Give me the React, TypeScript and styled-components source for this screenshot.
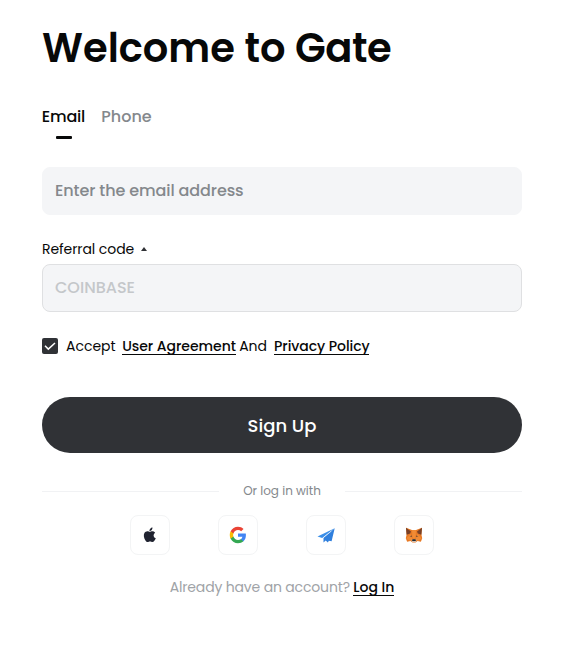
import React from "react";
import styled, { createGlobalStyle } from "styled-components";

const GlobalStyle = createGlobalStyle`
  * { box-sizing: border-box; }
  body {
    margin: 0;
    background: #fff;
    color: #070808;
    font-family: Poppins, Inter, "Liberation Sans", sans-serif;
  }
`;

const Page = styled.main`
  display: flex;
  flex-direction: column;
  width: 480px;
  margin-left: 42px;
  padding-top: 20px;
`;

const Label = styled.span<{ $track?: number }>`
  letter-spacing: ${(p) => p.$track ?? 0}px;
  white-space: nowrap;
`;

const Title = styled.h1`
  margin: 0;
  height: 56px;
  font-size: 40px;
  line-height: 56px;
  font-weight: 600;
  white-space: nowrap;
`;

const Tabs = styled.nav`
  display: flex;
  gap: 16px;
  margin-top: 29px;
  height: 35px;
`;

const Tab = styled.button<{ $active?: boolean; $width: number }>`
  display: flex;
  flex-direction: column;
  align-items: center;
  width: ${(p) => p.$width}px;
  padding: 0;
  border: 0;
  background: none;
  font: 500 16px/24px Poppins, Inter, sans-serif;
  color: ${(p) => (p.$active ? "#070808" : "#84888c")};

  &::after {
    content: "";
    width: 16px;
    height: 3px;
    margin-top: 7px;
    border-radius: 1px;
    background: ${(p) => (p.$active ? "#070808" : "transparent")};
  }
`;

const Field = styled.div<{ $disabled?: boolean }>`
  display: flex;
  align-items: center;
  height: 48px;
  padding: 0 12px;
  border: 1px solid ${(p) => (p.$disabled ? "#dfe0e2" : "#f4f5f7")};
  border-radius: 8px;
  background: #f4f5f7;
  color: ${(p) => (p.$disabled ? "#c4c7ca" : "#84888c")};
  font-size: 16px;
  font-weight: 500;
  line-height: 22px;
`;

const EmailField = styled(Field)`
  margin-top: 27px;
`;

const ReferralHeader = styled.div`
  display: flex;
  align-items: center;
  gap: 7px;
  height: 22px;
  margin: 23px 0 4px;
  font-size: 14px;
`;

const Terms = styled.div`
  display: flex;
  align-items: center;
  height: 22px;
  margin-top: 23px;
  font-size: 14px;
`;

const Checkbox = styled.span`
  display: flex;
  width: 16px;
  height: 16px;
  margin-right: 8px;
  border-radius: 2px;
  background: #303236;
`;

const Link = styled.a<{ $width: number; $before?: number; $after?: number; $track?: number }>`
  width: ${(p) => p.$width}px;
  height: 19px;
  margin: 0 ${(p) => p.$after ?? 0}px 1px ${(p) => p.$before ?? 0}px;
  border-bottom: 1px solid #070808;
  color: #070808;
  font-weight: 500;
  line-height: 21px;
  letter-spacing: ${(p) => p.$track ?? 0}px;
  white-space: nowrap;
`;

const Submit = styled.button`
  height: 56px;
  margin-top: 40px;
  padding: 2px 0 0;
  border: 0;
  border-radius: 28px;
  background: #303236;
  color: #fff;
  font: 500 18px/54px Poppins, Inter, sans-serif;
`;

const Divider = styled.div`
  display: flex;
  align-items: center;
  justify-content: center;
  height: 18px;
  margin-top: 29px;
  color: #84888c;
  font-size: 12px;

  &::before,
  &::after {
    content: "";
    flex: 1;
    height: 1px;
    background: #f1f2f4;
  }
`;

const DividerText = styled.span`
  width: 126px;
  text-align: center;
`;

const Providers = styled.div`
  display: flex;
  justify-content: center;
  gap: 48px;
  margin-top: 15px;
`;

const Provider = styled.button`
  display: flex;
  align-items: center;
  justify-content: center;
  width: 40px;
  height: 40px;
  padding: 0;
  border: 1px solid #f3f4f5;
  border-radius: 8px;
  background: #fff;
`;

const Footer = styled.div`
  display: flex;
  justify-content: center;
  align-items: center;
  height: 22px;
  margin-top: 21px;
  color: #a0a3a7;
  font-size: 14px;
`;

const AppleIcon = () => (
  <svg width="20" height="20" viewBox="0.6 0 24 24" fill="#202330">
    <path d="M16.900 12.600c0-2.200 1.800-3.300 1.900-3.400-1-1.500-2.600-1.700-3.200-1.800-1.400-.1-2.600.8-3.300.8s-1.700-.8-2.800-.8C8 7.500 6.700 8.300 5.900 9.500c-1.500 2.700-.4 6.600 1.100 8.800.7 1.100 1.600 2.300 2.800 2.200 1.100 0 1.500-.7 2.900-.7 1.300 0 1.700.7 2.900.7s2-1.100 2.700-2.100c.8-1.200 1.200-2.400 1.200-2.500-.1 0-2.600-.9-2.600-3.300zM14.700 5.900c.6-.8 1-1.800.9-2.900-.9 0-2 .6-2.700 1.400-.6.7-1.100 1.700-.9 2.800 1 .1 2-.5 2.700-1.300z" />
  </svg>
);

const GoogleIcon = () => (
  <svg width="18" height="18" viewBox="0 0 24 24">
    <path fill="#4285f4" d="M22.560 12.250c0-.78-.07-1.530-.2-2.250H12v4.260h5.920c-.26 1.370-1.040 2.530-2.210 3.310v2.770h3.570c2.080-1.920 3.280-4.740 3.280-8.090z" />
    <path fill="#34a853" d="M12 23c2.970 0 5.460-.98 7.280-2.660l-3.570-2.770c-.98.66-2.230 1.060-3.710 1.060-2.860 0-5.290-1.930-6.160-4.530H2.180v2.840C3.990 20.530 7.700 23 12 23z" />
    <path fill="#fbbc05" d="M5.840 14.090c-.22-.66-.35-1.360-.35-2.090s.13-1.430.35-2.090V7.070H2.180A11 11 0 0 0 1 12c0 1.780.43 3.450 1.180 4.930z" />
    <path fill="#ea4335" d="M12 5.380c1.620 0 3.060.56 4.210 1.640l3.150-3.150C17.450 2.090 14.970 1 12 1 7.700 1 3.990 3.470 2.180 7.070l3.660 2.840C6.710 7.310 9.140 5.380 12 5.380z" />
  </svg>
);

const TelegramIcon = () => (
  <svg width="18" height="16" viewBox="0 0 18 16">
    <path fill="#3a8ee8" d="M17.700 1.200.5 9.400l4.700 1.500z" />
    <path fill="#2f7fdd" d="M17.700 1.200 6.500 10.800v4.600l2.200-2 2.200 2 .9-1.600 2.800.4z" />
    <path stroke="#fff" strokeWidth=".6" d="M14.500 4 5.800 11" />
  </svg>
);

const FoxIcon = () => (
  <svg width="18" height="16" viewBox="0 0 18 16">
    <path fill="#e77924" d="M1 .8 7 3h4l6-2.200-.6 6.700.8 3.800-1.300 3.500-3.400-.8-2 1.500h-3l-2-1.500-3.400.8L.8 11.300l.8-3.800z" />
    <path fill="#774027" d="m1 .8 5 3.600-.8 2-3.600 1.400zM17 .8l-5 3.600.8 2 3.600 1.400z" />
    <path fill="#f08b35" d="M7 3h4l-.5 8.500h-3zM5.500 7l1.700 5-2 2-4-2.500zM12.500 7l-1.700 5 2 2 4-2.500z" />
    <path fill="#704a34" d="m4.500 9.200 2.200-.6.4 1.400zM13.500 9.200l-2.200-.6-.4 1.400z" />
    <path fill="#d2bfb0" d="M6.500 12.600h5l-.5 2.300H7z" />
    <path fill="#202a31" d="M7.500 12.200h3l.4 1.700H7.100z" />
  </svg>
);

const providers = [
  { name: "Apple", Icon: AppleIcon },
  { name: "Google", Icon: GoogleIcon },
  { name: "Telegram", Icon: TelegramIcon },
  { name: "MetaMask", Icon: FoxIcon },
];

export default function App() {
  return (
    <>
      <GlobalStyle />
      <Page>
        <Title>
          <Label>Welcome to </Label>
          <Label $track={-0.5}>Gate</Label>
        </Title>
        <Tabs>
          <Tab $active $width={43}><Label $track={-0.2}>Email</Label></Tab>
          <Tab $width={51}><Label>Phone</Label></Tab>
        </Tabs>
        <EmailField><Label $track={-0.1}>Enter the email address</Label></EmailField>
        <ReferralHeader>
          <Label $track={-0.08}>Referral code</Label>
          <svg width="6" height="4" viewBox="0 0 6 4">
            <path d="M3 0 6 4H0z" fill="#303236" />
          </svg>
        </ReferralHeader>
        <Field $disabled><Label>COINBASE</Label></Field>
        <Terms>
          <Checkbox>
            <svg width="16" height="16" viewBox="0 0 16 16" fill="none" stroke="#fff" strokeWidth="1.500">
              <path d="m3 7.800 3.300 3.300L13 5" />
            </svg>
          </Checkbox>
          <Label>Accept</Label>
          <Link $width={114} $before={6.5} $after={3} $track={-0.03}>User Agreement</Link>
          <Label>And</Label>
          <Link $width={95} $before={7} $track={-0.05}>Privacy Policy</Link>
        </Terms>
        <Submit><Label>Sign Up</Label></Submit>
        <Divider><DividerText><Label>Or log in with</Label></DividerText></Divider>
        <Providers>
          {providers.map(({ name, Icon }) => (
            <Provider key={name} aria-label={name}><Icon /></Provider>
          ))}
        </Providers>
        <Footer>
          <Label $track={-0.16}>Already have an account?</Label>
          <Link $width={41} $before={3.5}>Log In</Link>
        </Footer>
      </Page>
    </>
  );
}
